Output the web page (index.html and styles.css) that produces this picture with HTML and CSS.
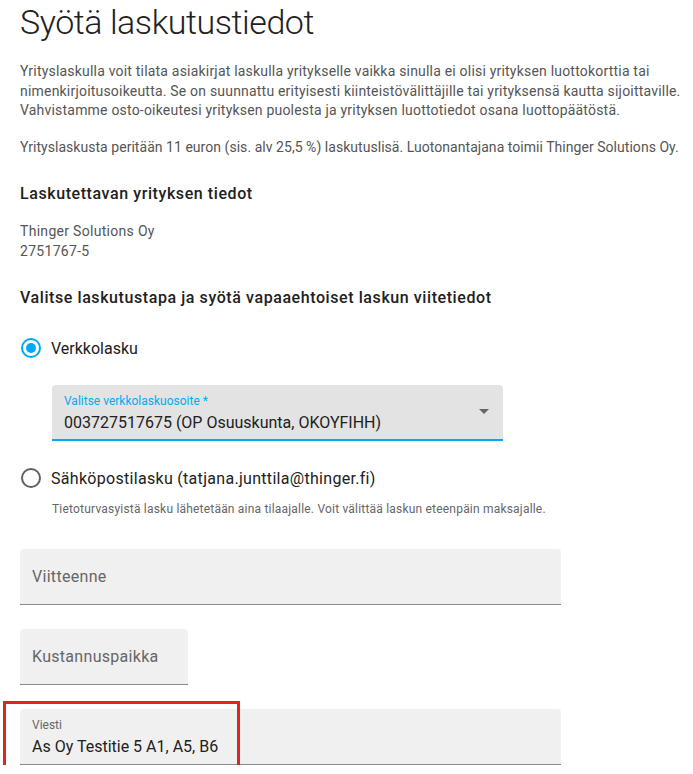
FILE: index.html
```html
<!DOCTYPE html>
<html>

<head>
    <meta content="text/html; charset=utf-8" http-equiv="Content-Type">
    <title>Syötä laskutustiedot</title>
    <link rel="stylesheet" href="styles.css">
</head>

<body>
<div class="mainContainer">
    <h1 class="pageTitle">Syötä laskutustiedot</h1>

    <p class="intro">Yrityslaskulla voit tilata asiakirjat laskulla yritykselle vaikka sinulla ei olisi yrityksen luottokorttia tai
        nimenkirjoitusoikeutta. Se on suunnattu erityisesti kiinteistövälittäjille tai yrityksensä kautta sijoittaville.
        Vahvistamme osto-oikeutesi yrityksen puolesta ja yrityksen luottotiedot osana luottopäätöstä.</p>
    <p class="intro fee">Yrityslaskusta peritään 11 euron (sis. alv 25,5 %) laskutuslisä. Luotonantajana toimii Thinger Solutions Oy.</p>

    <h2 class="sectionTitle">Laskutettavan yrityksen tiedot</h2>
    <div class="company">
        <div>Thinger Solutions Oy</div>
        <div>2751767-5</div>
    </div>

    <h2 class="sectionTitle">Valitse laskutustapa ja syötä vapaaehtoiset laskun viitetiedot</h2>

    <label class="radioRow">
        <span class="radio checked"></span>
        <span class="radioLabel">Verkkolasku</span>
    </label>

    <div class="selectField">
        <div class="fieldLabel focused">Valitse verkkolaskuosoite *</div>
        <div class="fieldValue">003727517675 (OP Osuuskunta, OKOYFIHH)</div>
        <svg class="selectArrow" width="10" height="5" viewBox="0 0 10 5"><path d="M0 0h10L5 5z" fill="#666"/></svg>
    </div>

    <label class="radioRow second">
        <span class="radio"></span>
        <span class="radioLabel spaced">Sähköpostilasku (tatjana.junttila@thinger.fi)</span>
    </label>
    <div class="helper">Tietoturvasyistä lasku lähetetään aina tilaajalle. Voit välittää laskun eteenpäin maksajalle.</div>

    <div class="textField wide">
        <div class="placeholder">Viitteenne</div>
    </div>
    <div class="textField narrow">
        <div class="placeholder">Kustannuspaikka</div>
    </div>
    <div class="textField wide filled">
        <div class="fieldLabel">Viesti</div>
        <div class="fieldValue">As Oy Testitie 5 A1, A5, B6</div>
        <div class="highlight"></div>
    </div>
</div>
</body>

</html>
```

FILE: styles.css
```css
body {
    margin: 0;
    font-family: Roboto, "Liberation Sans", sans-serif;
    color: #212121;
    background: #ffffff;
}

.mainContainer {
    display: block;
    padding: 0 0 0 20px;
    width: 673px;
}

.pageTitle {
    margin: 0;
    padding-top: 2px;
    font-size: 34px;
    font-weight: 300;
    line-height: 40px;
    letter-spacing: -0.45px;
    color: #212121;
}

.intro {
    margin: 20px 0 0 0;
    font-size: 14px;
    line-height: 19.5px;
    letter-spacing: 0.2px;
    color: #555555;
}

.intro.fee {
    margin-top: 17px;
    letter-spacing: 0.04px;
}

.sectionTitle {
    margin: 26px 0 0 0;
    font-size: 16px;
    font-weight: 500;
    line-height: 22px;
    letter-spacing: 0.58px;
    color: #212121;
}

.company {
    margin-top: 16px;
    font-size: 14px;
    line-height: 20px;
    letter-spacing: 0.3px;
    color: #555555;
}

.radioRow {
    display: flex;
    align-items: center;
    gap: 10px;
    margin-top: 27px;
    height: 24px;
}

.radioRow.second {
    margin-top: 25px;
}

.radio {
    box-sizing: border-box;
    width: 20px;
    height: 20px;
    margin-left: 1px;
    border: 2px solid #616161;
    border-radius: 50%;
    position: relative;
}

.radio.checked {
    border-color: #03a9f4;
}

.radio.checked::after {
    content: "";
    position: absolute;
    left: 3px;
    top: 3px;
    width: 10px;
    height: 10px;
    border-radius: 50%;
    background: #03a9f4;
}

.radioLabel {
    font-size: 16px;
    color: #212121;
}

.radioLabel.spaced {
    letter-spacing: 0.3px;
}

.selectField {
    position: relative;
    box-sizing: border-box;
    width: 451px;
    height: 56px;
    margin: 25px 0 0 32px;
    padding: 8px 12px 0 12px;
    background: #e3e3e3;
    border-radius: 4px 4px 0 0;
    border-bottom: 2px solid #03a9f4;
}

.selectArrow {
    position: absolute;
    right: 14px;
    top: 24px;
}

.fieldLabel {
    font-size: 12px;
    line-height: 16px;
    color: #666666;
}

.fieldLabel.focused {
    color: #03a9f4;
}

.fieldValue {
    margin-top: 3px;
    font-size: 16px;
    line-height: 22px;
    color: #212121;
}

.helper {
    margin: 11px 0 0 32px;
    font-size: 12px;
    line-height: 16px;
    letter-spacing: 0.2px;
    color: #666666;
}

.textField {
    position: relative;
    box-sizing: border-box;
    height: 56px;
    padding: 0 12px;
    background: #f0f0f0;
    border-radius: 4px 4px 0 0;
    border-bottom: 1px solid #8a8a8a;
    margin-top: 24px;
}

.textField.wide {
    width: 541px;
    margin-top: 32px;
}

.textField.narrow {
    width: 168px;
}

.textField.filled {
    padding-top: 8px;
    margin-top: 24px;
}

.placeholder {
    font-size: 16px;
    line-height: 55px;
    letter-spacing: 0.3px;
    color: #666666;
}

.highlight {
    position: absolute;
    left: -17px;
    top: -8px;
    width: 231px;
    height: 64px;
    border: 3px solid #e02424;
}
```
